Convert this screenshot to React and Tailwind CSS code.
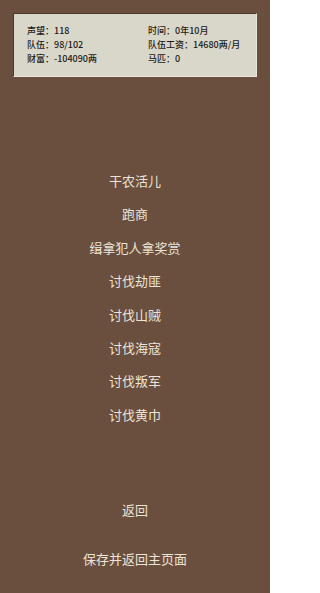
const stats = [
  ["声望：118", "时间：0年10月"],
  ["队伍：98/102", "队伍工资：14680两/月"],
  ["财富：-104090两", "马匹：0"],
];

const jobs = ["干农活儿", "跑商", "缉拿犯人拿奖赏", "讨伐劫匪", "讨伐山贼", "讨伐海寇", "讨伐叛军", "讨伐黄巾"];

export default function App() {
  return (
    <div
      className="w-[270px] h-[593px] bg-[#6a4e3e] overflow-hidden"
      style={{ fontFamily: '"Noto Sans CJK SC", "Noto Sans", sans-serif' }}
    >
      <div className="pt-[13px] px-[13px] w-full">
        <div className="h-[64px] bg-[#d9d7ca] border-t border-l border-r border-b border-t-[#4e382b] border-l-[#4e382b] border-r-[#ebe7dc] border-b-[#ebe7dc] pt-[10px] pl-[13px]">
          {stats.map(([a, b]) => (
            <div key={a} className="flex h-[14px] items-center text-[9px] font-medium text-[#1e1a16] whitespace-nowrap">
              <span className="w-[121px]">{a}</span>
              <span>{b}</span>
            </div>
          ))}
        </div>
      </div>

      <div className="mt-[87px] flex flex-col">
        {jobs.map((j) => (
          <button key={j} className="h-[33.4px] flex items-center justify-center text-[13px] text-[#ebe4d7]">
            {j}
          </button>
        ))}
      </div>

      <div className="mt-[62px] flex flex-col">
        <button className="h-[33.4px] flex items-center justify-center text-[13px] text-[#ebe4d7]">返回</button>
        <button className="mt-[16px] h-[33.4px] flex items-center justify-center text-[13px] text-[#ebe4d7]">保存并返回主页面</button>
      </div>
    </div>
  );
}
